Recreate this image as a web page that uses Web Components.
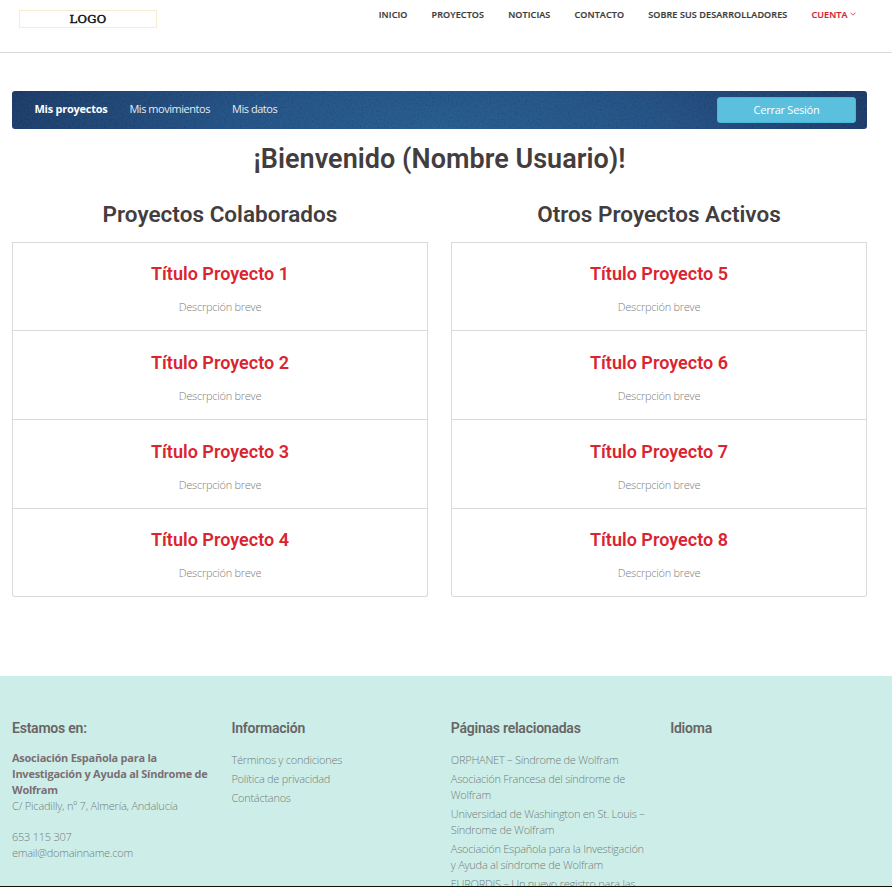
<!DOCTYPE html>
<html lang="es">
<head>
<meta charset="utf-8">
<title>Mis proyectos</title>
<style>
html, body { margin: 0; height: 100%; overflow: hidden; }
body { background: #fff; color: #7d7d7d; font: 300 11px/16px "Open Sans", sans-serif; letter-spacing: -.25px; }
</style>
</head>
<body>
<account-page></account-page>
<script>
const define = (name, html) => {
  const template = document.createElement('template');
  template.innerHTML = html;
  customElements.define(name, class extends HTMLElement {
    constructor() {
      super();
      this.attachShadow({ mode: 'open' }).append(template.content.cloneNode(true));
    }
  });
};

define('site-logo', `<style>
:host { display: flex; box-sizing: border-box; width: 138px; height: 18px; align-items: center; justify-content: center;
  border: 1px solid #f5ecd3; color: #111; font: 400 11.5px/16px "DejaVu Serif", serif; letter-spacing: .3px; -webkit-text-stroke: .5px #111; }
</style><span><slot></slot></span>`);

define('nav-link', `<style>
:host { display: block; color: #3c3c3c; font: 600 9px/14px "Open Sans", sans-serif; letter-spacing: .12px; white-space: nowrap; -webkit-text-stroke: .2px currentColor; }
:host([active]) { color: #da2430; }
svg { display: none; width: 6px; height: 4px; margin-left: 2px; vertical-align: 2px; }
:host([active]) svg { display: inline-block; }
</style><slot></slot><svg viewBox="0 0 6 4" fill="none" stroke="currentColor" stroke-width=".8"><path d="M.5.7 3 3.2 5.5.7"/></svg>`);

define('site-header', `<style>
:host { display: flex; box-sizing: border-box; height: 53px; padding: 10px 36.4px 0 19px; justify-content: space-between; align-items: flex-start;
  border-bottom: 1px solid #dadada; }
nav { display: flex; gap: 24px; margin-top: -2px; }
</style><site-logo>LOGO</site-logo><nav><slot></slot></nav>`);

define('account-bar', `<style>
:host { display: flex; position: relative; overflow: hidden; box-sizing: border-box; height: 38px; padding: 0 11px 0 22.5px; align-items: center; border-radius: 3px; color: #e4ebf2;
  background: radial-gradient(ellipse 58% 300% at 50% 100%, #245b8e 0%, #215084 45%, #173560 100%); }
.grain { position: absolute; inset: 0; width: 100%; height: 100%; opacity: .045; }
nav { position: relative; display: flex; gap: 22px; flex: 1; margin-top: -2px; }
button { position: relative; width: 139px; height: 26px; padding: 0; border: 1px solid #46b8da; border-radius: 3px; background: #5bc0de; color: #fff;
  font: 400 11px/24px "Open Sans", sans-serif; letter-spacing: -.25px; }
</style>
<svg class="grain"><filter id="g"><feTurbulence type="fractalNoise" baseFrequency=".5" numOctaves="2"/><feColorMatrix values="1.5 0 0 0 -.4  1.5 0 0 0 -.4  1.5 0 0 0 -.4  0 0 0 0 1"/></filter><rect width="100%" height="100%" filter="url(#g)"/></svg>
<nav><slot></slot></nav><button>Cerrar Sesión</button>`);

define('bar-link', `<style>
:host { display: block; font-weight: 400; letter-spacing: -.46px; white-space: nowrap; }
:host([active]) { color: #fff; font-weight: 700; letter-spacing: -.26px; }
</style><slot></slot>`);

define('project-item', `<style>
:host { display: block; box-sizing: border-box; height: 88.6px; padding-top: 21.65px; border-top: 1px solid #dadada; text-align: center; }
h4 { margin: 0 0 14px; color: #da2430; font: 600 18px/20px Roboto, sans-serif; letter-spacing: .02px; }
p { margin: 0; line-height: 18px; }
</style><h4><slot name="title"></slot></h4><p><slot></slot></p>`);

define('project-list', `<style>
:host { display: block; }
h3 { margin: 0 0 14.8px; text-align: center; color: #433d3e; font: 600 22.5px/26px Roboto, sans-serif; letter-spacing: .02px; }
div { border: 1px solid #dadada; border-top: 0; border-radius: 0 0 3px 3px; height: 354.2px; }
</style><h3><slot name="title"></slot></h3><div><slot></slot></div>`);

define('footer-column', `<style>
:host { display: block; }
h4 { margin: 0 0 var(--title-gap, 16px); color: #676565; font: 600 14px/16px Roboto, sans-serif; letter-spacing: -.23px; }
</style><h4><slot name="title"></slot></h4><slot></slot>`);

define('footer-link', `<style>:host { display: block; margin-bottom: 3px; }</style><slot></slot>`);

define('site-footer', `<style>
:host { display: grid; box-sizing: border-box; grid-template-columns: repeat(4, 197px); column-gap: 22.4px; height: 211px; padding: 44px 0 0 12px;
  overflow: hidden; background: #cdeee8; border-bottom: 1px solid #101405; color: #737c7b; }
</style><slot></slot>`);

define('account-page', `<style>
:host { display: flex; flex-direction: column; height: 887px; }
main { flex: 1; padding: 38px 25px 0 12px; }
h2 { margin: 14px 0 26px; text-align: center; color: #433d3e; font: 600 27px/32px Roboto, sans-serif; letter-spacing: .03px; }
.lists { display: grid; grid-template-columns: 416px 416px; column-gap: 23px; }
strong { display: block; color: #7b6e74; font-weight: 700; letter-spacing: -.25px; }
.contact { margin-top: 15px; }
.street { letter-spacing: -.2px; }
.address { --title-gap: 14px; }
</style>
<site-header>
  <nav-link>INICIO</nav-link><nav-link>PROYECTOS</nav-link><nav-link>NOTICIAS</nav-link><nav-link>CONTACTO</nav-link>
  <nav-link>SOBRE SUS DESARROLLADORES</nav-link><nav-link active>CUENTA</nav-link>
</site-header>
<main>
  <account-bar><bar-link active>Mis proyectos</bar-link><bar-link>Mis movimientos</bar-link><bar-link>Mis datos</bar-link></account-bar>
  <h2>¡Bienvenido (Nombre Usuario)!</h2>
  <div class="lists">
    <project-list><span slot="title">Proyectos Colaborados</span>
      <project-item><span slot="title">Título Proyecto 1</span>Descrpción breve</project-item>
      <project-item><span slot="title">Título Proyecto 2</span>Descrpción breve</project-item>
      <project-item><span slot="title">Título Proyecto 3</span>Descrpción breve</project-item>
      <project-item><span slot="title">Título Proyecto 4</span>Descrpción breve</project-item>
    </project-list>
    <project-list><span slot="title">Otros Proyectos Activos</span>
      <project-item><span slot="title">Título Proyecto 5</span>Descrpción breve</project-item>
      <project-item><span slot="title">Título Proyecto 6</span>Descrpción breve</project-item>
      <project-item><span slot="title">Título Proyecto 7</span>Descrpción breve</project-item>
      <project-item><span slot="title">Título Proyecto 8</span>Descrpción breve</project-item>
    </project-list>
  </div>
</main>
<site-footer>
  <footer-column class="address"><span slot="title">Estamos en:</span>
    <strong>Asociación Española para la<br>Investigación y Ayuda al Síndrome de<br>Wolfram</strong>
    <div class="street">C/ Picadilly, nº 7, Almería, Andalucía</div>
    <div class="contact">653 115 307<br>email@domainname.com</div>
  </footer-column>
  <footer-column><span slot="title">Información</span>
    <footer-link>Términos y condiciones</footer-link><footer-link>Política de privacidad</footer-link><footer-link>Contáctanos</footer-link>
  </footer-column>
  <footer-column><span slot="title">Páginas relacionadas</span>
    <footer-link>ORPHANET – Síndrome de Wolfram</footer-link>
    <footer-link>Asociación Francesa del síndrome de<br>Wolfram</footer-link>
    <footer-link>Universidad de Washington en St. Louis –<br>Síndrome de Wolfram</footer-link>
    <footer-link>Asociación Española para la Investigación<br>y Ayuda al síndrome de Wolfram</footer-link>
    <footer-link>EURORDIS – Un nuevo registro para las</footer-link>
  </footer-column>
  <footer-column><span slot="title">Idioma</span></footer-column>
</site-footer>`);
</script>
</body>
</html>
